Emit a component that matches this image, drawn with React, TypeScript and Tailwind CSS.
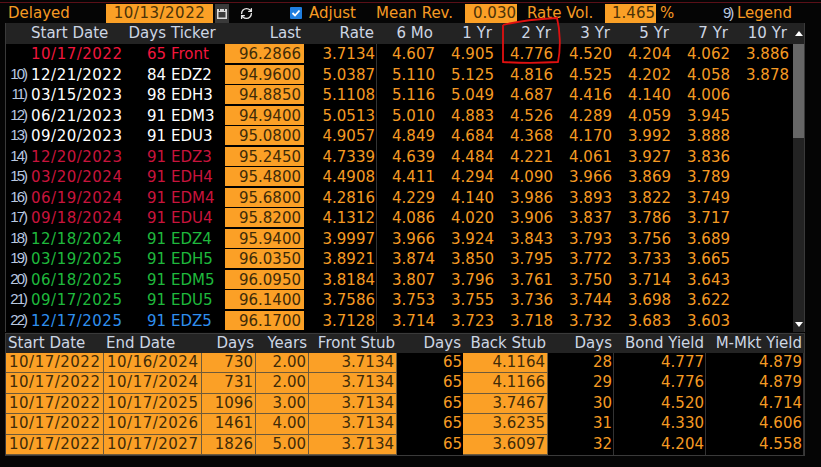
import React from 'react';
import { RefreshCw } from 'lucide-react';

const font = "font-['DejaVu_Sans','Liberation_Sans',sans-serif]";
const topCols = 'grid-cols-[23px_95px_42px_59px_79px_73px_59px_59px_59px_59px_59px_59px_59px]';
const botCols = 'grid-cols-[98px_98px_54px_53px_88px_66px_85px_66px_92px_98px]';

type Row = { idx: string; start: string; days: string; ticker: string; last: string; vals: string[]; color: string };

const red = 'text-[#f0163c]';
const white = 'text-white';
const crimson = 'text-[#c8143c]';
const green = 'text-[#1fb83c]';
const blue = 'text-[#2f8fee]';

const rows: Row[] = [
  { idx: '', start: '10/17/2022', days: '65', ticker: 'Front', last: '96.2866', vals: ['3.7134', '4.607', '4.905', '4.776', '4.520', '4.204', '4.062', '3.886'], color: red },
  { idx: '10)', start: '12/21/2022', days: '84', ticker: 'EDZ2', last: '94.9600', vals: ['5.0387', '5.110', '5.125', '4.816', '4.525', '4.202', '4.058', '3.878'], color: white },
  { idx: '11)', start: '03/15/2023', days: '98', ticker: 'EDH3', last: '94.8850', vals: ['5.1108', '5.116', '5.049', '4.687', '4.416', '4.140', '4.006', ''], color: white },
  { idx: '12)', start: '06/21/2023', days: '91', ticker: 'EDM3', last: '94.9400', vals: ['5.0513', '5.010', '4.883', '4.526', '4.289', '4.059', '3.945', ''], color: white },
  { idx: '13)', start: '09/20/2023', days: '91', ticker: 'EDU3', last: '95.0800', vals: ['4.9057', '4.849', '4.684', '4.368', '4.170', '3.992', '3.888', ''], color: white },
  { idx: '14)', start: '12/20/2023', days: '91', ticker: 'EDZ3', last: '95.2450', vals: ['4.7339', '4.639', '4.484', '4.221', '4.061', '3.927', '3.836', ''], color: crimson },
  { idx: '15)', start: '03/20/2024', days: '91', ticker: 'EDH4', last: '95.4800', vals: ['4.4908', '4.411', '4.294', '4.090', '3.966', '3.869', '3.789', ''], color: crimson },
  { idx: '16)', start: '06/19/2024', days: '91', ticker: 'EDM4', last: '95.6800', vals: ['4.2816', '4.229', '4.140', '3.986', '3.893', '3.822', '3.749', ''], color: crimson },
  { idx: '17)', start: '09/18/2024', days: '91', ticker: 'EDU4', last: '95.8200', vals: ['4.1312', '4.086', '4.020', '3.906', '3.837', '3.786', '3.717', ''], color: crimson },
  { idx: '18)', start: '12/18/2024', days: '91', ticker: 'EDZ4', last: '95.9400', vals: ['3.9997', '3.966', '3.924', '3.843', '3.793', '3.756', '3.689', ''], color: green },
  { idx: '19)', start: '03/19/2025', days: '91', ticker: 'EDH5', last: '96.0350', vals: ['3.8921', '3.874', '3.850', '3.795', '3.772', '3.733', '3.665', ''], color: green },
  { idx: '20)', start: '06/18/2025', days: '91', ticker: 'EDM5', last: '96.0950', vals: ['3.8184', '3.807', '3.796', '3.761', '3.750', '3.714', '3.643', ''], color: green },
  { idx: '21)', start: '09/17/2025', days: '91', ticker: 'EDU5', last: '96.1400', vals: ['3.7586', '3.753', '3.755', '3.736', '3.744', '3.698', '3.622', ''], color: green },
  { idx: '22)', start: '12/17/2025', days: '91', ticker: 'EDZ5', last: '96.1700', vals: ['3.7128', '3.714', '3.723', '3.718', '3.732', '3.683', '3.603', ''], color: blue },
];

const swaps = [
  ['10/17/2022', '10/16/2024', '730', '2.00', '3.7134', '65', '4.1164', '28', '4.777', '4.879'],
  ['10/17/2022', '10/17/2024', '731', '2.00', '3.7134', '65', '4.1166', '29', '4.776', '4.879'],
  ['10/17/2022', '10/17/2025', '1096', '3.00', '3.7134', '65', '3.7467', '30', '4.520', '4.714'],
  ['10/17/2022', '10/17/2026', '1461', '4.00', '3.7134', '65', '3.6235', '31', '4.330', '4.606'],
  ['10/17/2022', '10/17/2027', '1826', '5.00', '3.7134', '65', '3.6097', '32', '4.204', '4.558'],
];

const topHeads = ['Last', 'Rate', '6 Mo', '1 Yr', '2 Yr', '3 Yr', '5 Yr', '7 Yr', '10 Yr'];

function Toolbar() {
  return (
    <div className="flex h-[20px] items-center text-[#f59a23]">
      <span className="ml-2 w-[98px]">Delayed</span>
      <span className="flex h-[19px] w-[107px] items-center justify-center bg-[#fba026] tracking-[0.5px] text-[#4a3208]">10/13/2022</span>
      <span className="ml-[2px] flex h-[19px] w-[14px] items-center justify-center bg-[#3a3a3a]">
        <svg width="10" height="11" viewBox="0 0 10 11"><path d="M0 1h10v10H0z" fill="#d8d8d8" /><path d="M2 0h1v3H2zM7 0h1v3H7z" fill="#3a3a3a" /><path d="M1.500 4h7v5.500h-7z" fill="#3a3a3a" /></svg>
      </span>
      <RefreshCw className="ml-[11px] h-[13px] w-[13px] text-[#e8e8e8]" strokeWidth={2.5} />
      <span className="ml-[37px] flex h-[12px] w-[12px] items-center justify-center rounded-[1px] bg-[#1f7fe0]">
        <svg width="10" height="10" viewBox="0 0 10 10"><path d="M1.500 5l2.500 2.500 4.500-5" fill="none" stroke="#fff" strokeWidth="1.800" /></svg>
      </span>
      <span className="ml-[7px] w-[67px]">Adjust</span>
      <span className="w-[89px] whitespace-nowrap">Mean Rev.</span>
      <span className="flex h-[19px] w-[52px] items-center justify-end bg-[#fba026] pr-px text-[#4a3208]">0.030</span>
      <span className="ml-[10px] w-[78px] whitespace-nowrap">Rate Vol.</span>
      <span className="flex h-[19px] w-[51px] items-center justify-end bg-[#fba026] pr-px text-[#4a3208]">1.465</span>
      <span className="ml-[4px] w-[63px]">%</span>
      <span className="w-[14px] text-[15px] leading-[16px] tracking-[-2px] text-[#b9c8e0] font-['Liberation_Sans',sans-serif]">9)</span>
      <span>Legend</span>
    </div>
  );
}

function TopTable() {
  return (
    <div className="flex h-[309px] border-x border-[#3a3a3a] bg-black">
      <div className="w-[788px] overflow-hidden">
        <div className={`grid h-[21px] ${topCols} bg-[#232323] leading-[21px] text-[#cdd6e4]`}>
          <span />
          <span className="pl-[2px]">Start Date</span>
          <span className="text-right">Days</span>
          <span className="pl-[5px]">Ticker</span>
          {topHeads.map((h) => (
            <span key={h} className="pr-[3px] text-right">{h}</span>
          ))}
        </div>
        {rows.map((r) => (
          <div key={r.start} className={`grid h-[20.500px] ${topCols} leading-[21px]`}>
            <span className="pr-[3px] text-right text-[15px] leading-[17px] tracking-[-2px] text-[#b9c8e0] font-['Liberation_Sans',sans-serif]">{r.idx}</span>
            <span className={`whitespace-nowrap pl-[2px] tracking-[0.5px] ${r.color}`}>{r.start}</span>
            <span className={`text-right ${r.color}`}>{r.days}</span>
            <span className={`pl-[5px] ${r.color}`}>{r.ticker}</span>
            <span className="h-[19px] bg-[#fba026] pr-[3px] text-right text-[#3f2b08]">{r.last}</span>
            {r.vals.map((v, i) => (
              <span key={i} className={`pr-[1px] text-right text-[#f59a23] ${i === 0 ? 'border-r border-[#333]' : ''}`}>{v}</span>
            ))}
          </div>
        ))}
      </div>
      <div className="flex w-[11px] flex-col bg-[#232323]">
        <div className="flex h-[21px] items-center justify-center">
          <span className="h-0 w-0 border-x-[4px] border-b-[5px] border-x-transparent border-b-white" />
        </div>
        <div className="h-[94px] bg-[#666]" />
        <div className="flex flex-1 items-end justify-center pb-[5px]">
          <span className="h-0 w-0 border-x-[4px] border-t-[5px] border-x-transparent border-t-white" />
        </div>
      </div>
    </div>
  );
}

function BottomTable() {
  const heads = ['Start Date', 'End Date', 'Days', 'Years', 'Front Stub', 'Days', 'Back Stub', 'Days', 'Bond Yield', 'M-Mkt Yield'];
  return (
    <div className="mt-px border-x border-b border-[#3a3a3a] bg-black">
      <div className={`grid h-[20px] ${botCols} border-t border-[#3a3a3a] bg-[#232323] text-[#cdd6e4]`}>
        {heads.map((h, i) => (
          <span key={i} className={`whitespace-nowrap leading-[19px] ${i < 2 ? 'pl-[2px]' : 'pr-[2px] text-right'}`}>{h}</span>
        ))}
      </div>
      {swaps.map((s, ri) => (
        <div key={ri} className={`grid h-[20.400px] ${botCols} leading-[19px]`}>
          {s.map((c, i) => {
            const orange = i < 5 || i === 6;
            return (
              <span
                key={i}
                className={orange
                  ? `whitespace-nowrap border-b border-r border-[#6e5a3a] bg-[#fba026] pr-[2px] text-[#3f2b08] ${i < 2 ? 'pl-[3px] tracking-[0.5px]' : 'text-right'}`
                  : `pr-px text-right text-[#f59a23] ${i > 6 ? 'border-r border-[#333]' : ''}`}
              >
                {c}
              </span>
            );
          })}
        </div>
      ))}
    </div>
  );
}

export default function App() {
  return (
    <div className={`relative h-[467px] w-[821px] overflow-hidden bg-[#050505] text-[15px] leading-[20px] ${font}`}>
      <div className="h-[3px] border-b border-[#5a1018]" />
      <Toolbar />
      <div className="ml-[5px] w-[800px]">
        <TopTable />
        <BottomTable />
      </div>
      <svg className="pointer-events-none absolute left-0 top-0" width="821" height="467" fill="none">
        <path d="M503 25C518 21 540 19 557 18C560 30 561 48 558 62C540 63 520 63 503 62C503 50 503 38 503 25" stroke="#e01010" strokeWidth="1.800" />
      </svg>
    </div>
  );
}
